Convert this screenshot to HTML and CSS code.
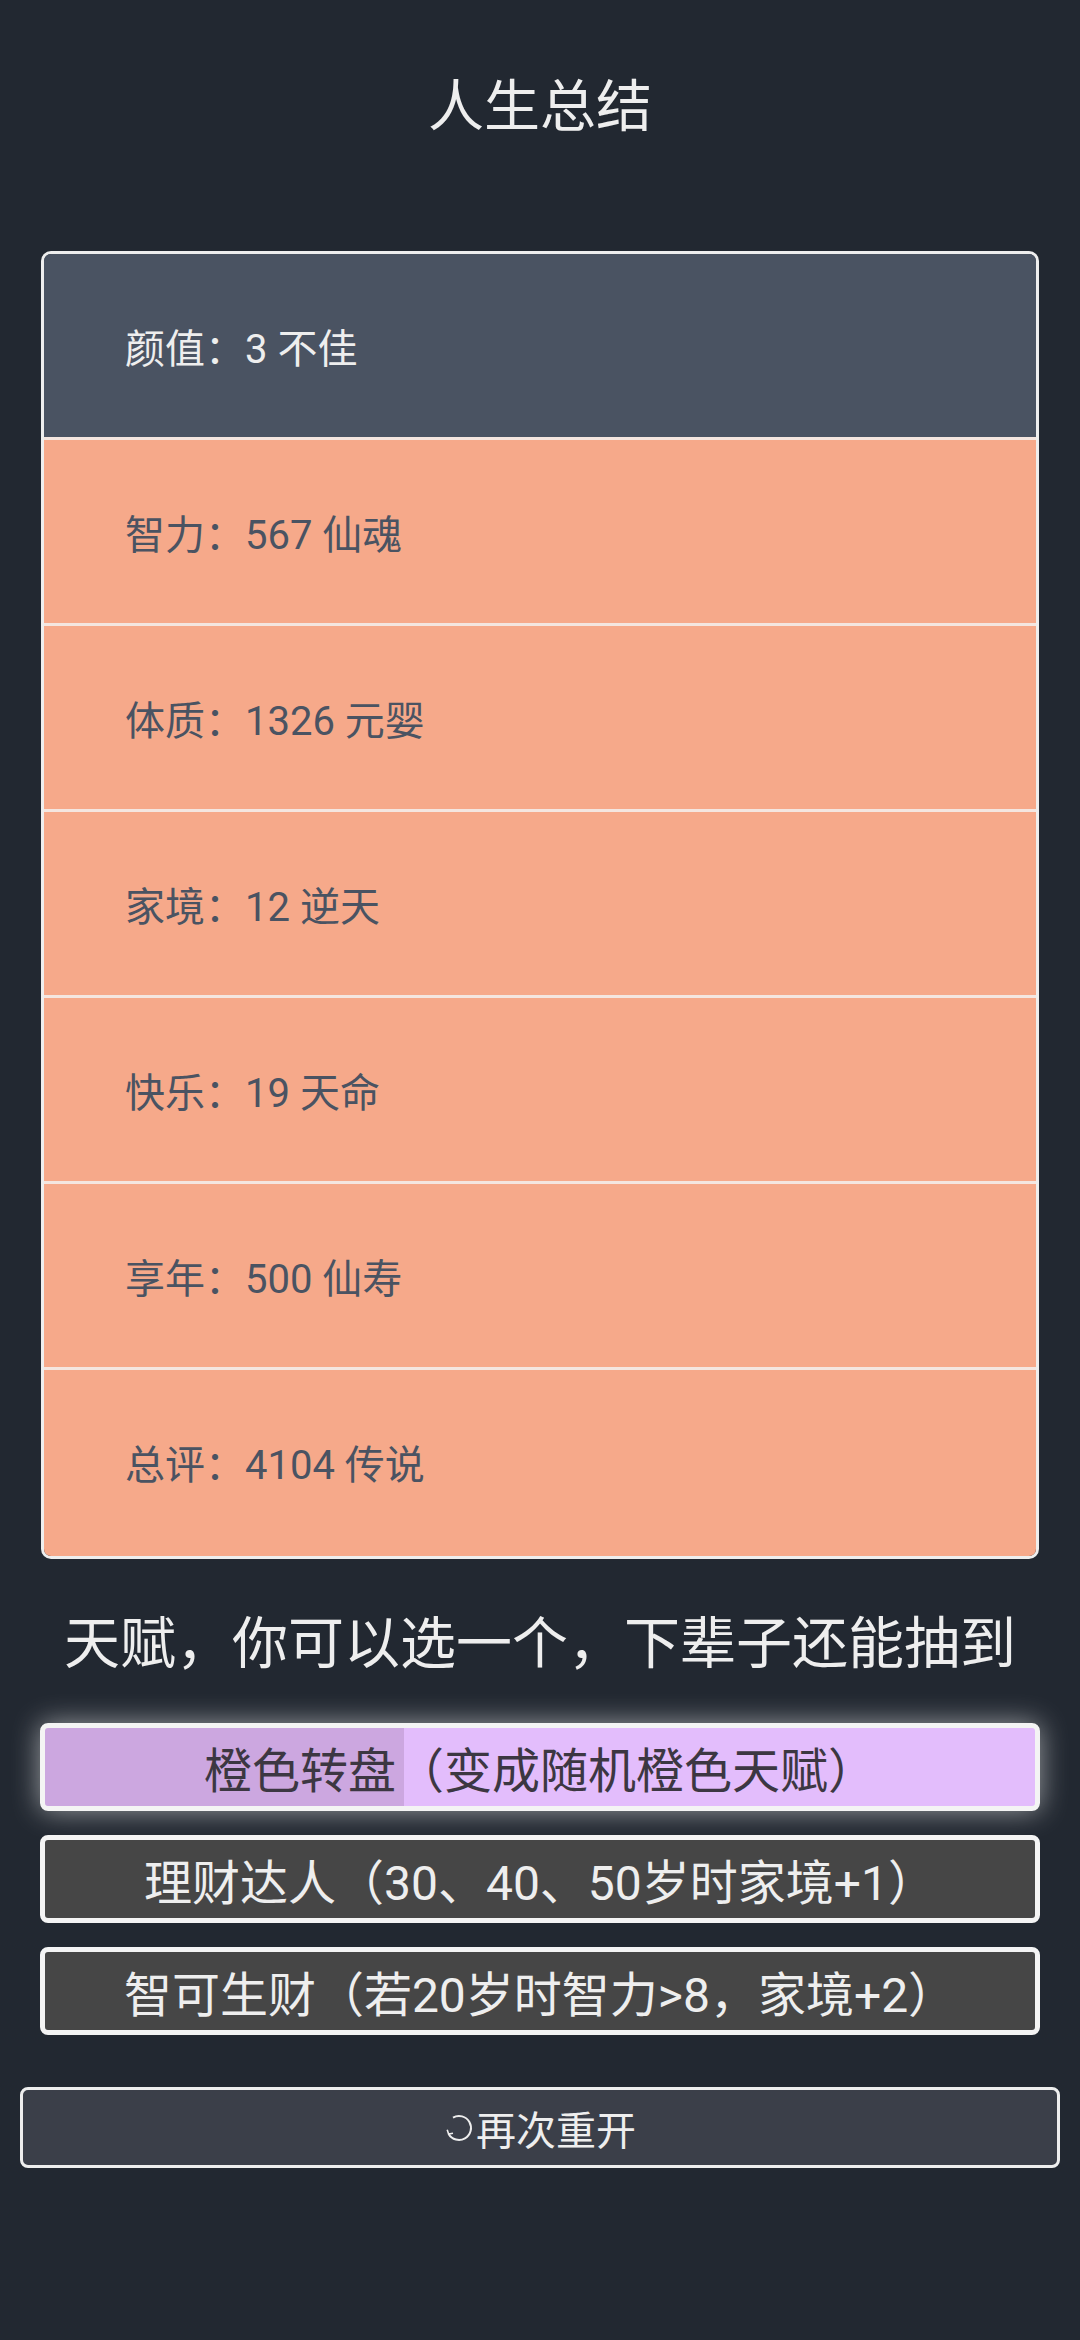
FILE: index.html
```html
<!DOCTYPE html>
<html lang="zh-cn">
<head>
    <meta charset="UTF-8">
    <meta name="viewport" content="width=device-width, initial-scale=1.0">
    <title>人生总结</title>
    <link rel="stylesheet" href="styles.css">
</head>
<body>

    <h1 class="titulo">人生总结</h1>

    <!-- Resumo dos atributos -->
    <ul class="resumo">
        <li class="linha cinza">颜值：3 不佳</li>
        <li class="linha">智力：567 仙魂</li>
        <li class="linha">体质：1326 元婴</li>
        <li class="linha">家境：12 逆天</li>
        <li class="linha">快乐：19 天命</li>
        <li class="linha">享年：500 仙寿</li>
        <li class="linha">总评：4104 传说</li>
    </ul>

    <h2 class="subtitulo">天赋，你可以选一个，下辈子还能抽到</h2>

    <div class="talentos">
        <button class="talento roxo selecionado">橙色转盘（变成随机橙色天赋）</button>
        <button class="talento">理财达人（30、40、50岁时家境+1）</button>
        <button class="talento">智可生财（若20岁时智力&gt;8，家境+2）</button>
    </div>

    <button class="reiniciar">
        <svg class="icone" viewBox="0 0 30 30" width="30" height="30">
            <path d="M9 4.6 A12 12 0 1 1 4.6 21" fill="none" stroke="#eeeeee" stroke-width="2"/>
            <path d="M3.2 16.8 L4.6 21 L9 20.2" fill="none" stroke="#eeeeee" stroke-width="1.6"/>
        </svg>再次重开
    </button>

</body>
</html>
```

FILE: styles.css
```css
body {
    background: #222831;
    font-family: Roboto, "Noto Sans CJK SC", sans-serif;
    color: #eeeeee;
    margin: 0;
    padding: 0 0 150px 0;
}

.titulo {
    font-size: 56px;
    font-weight: normal;
    line-height: 84px;
    text-align: center;
    margin: 65px 0 0 0;
}

/* Cartao com os atributos */
.resumo {
    list-style: none;
    margin: 102px 41px 0 41px;
    padding: 0;
    border: 3px solid #eeeeee;
    border-radius: 10px;
    overflow: hidden;
    background: #222831;
}

.linha {
    height: 183px;
    display: flex;
    align-items: center;
    padding-left: 81px;
    font-size: 40px;
    color: #4a5362;
    background: #f6a98a;
    border-bottom: 3px solid #f4e6e0;
}

.linha:last-child {
    border-bottom-color: transparent;
}

.linha.cinza {
    background: #4a5362;
    color: #eeeeee;
}

.subtitulo {
    font-size: 56px;
    font-weight: normal;
    line-height: 84px;
    text-align: center;
    margin: 43px 0 0 0;
}

/* Lista de talentos */
.talentos {
    display: flex;
    flex-direction: column;
    gap: 24px;
    margin: 37px 40px 0 40px;
}

.talento {
    height: 88px;
    border: 5px solid #f4f4f4;
    border-radius: 8px;
    background: #464646;
    color: #eeeeee;
    font-family: Roboto, "Noto Sans CJK SC", sans-serif;
    font-size: 48px;
    padding: 0;
}

.talento.roxo {
    background: linear-gradient(to right, #cca7e0 0, #cca7e0 359px, #e3bdfc 359px);
    color: #3c3742;
}

.talento.selecionado {
    box-shadow: 0 0 28px rgba(255, 255, 255, 0.55);
}

.reiniciar {
    display: flex;
    align-items: center;
    justify-content: center;
    width: calc(100% - 40px);
    height: 81px;
    margin: 52px 20px 0 20px;
    border: 3px solid #eeeeee;
    border-radius: 8px;
    background: #3b3f49;
    color: #eeeeee;
    font-family: Roboto, "Noto Sans CJK SC", sans-serif;
    font-size: 40px;
    padding: 0;
}

.icone {
    margin-right: 2px;
}
```
